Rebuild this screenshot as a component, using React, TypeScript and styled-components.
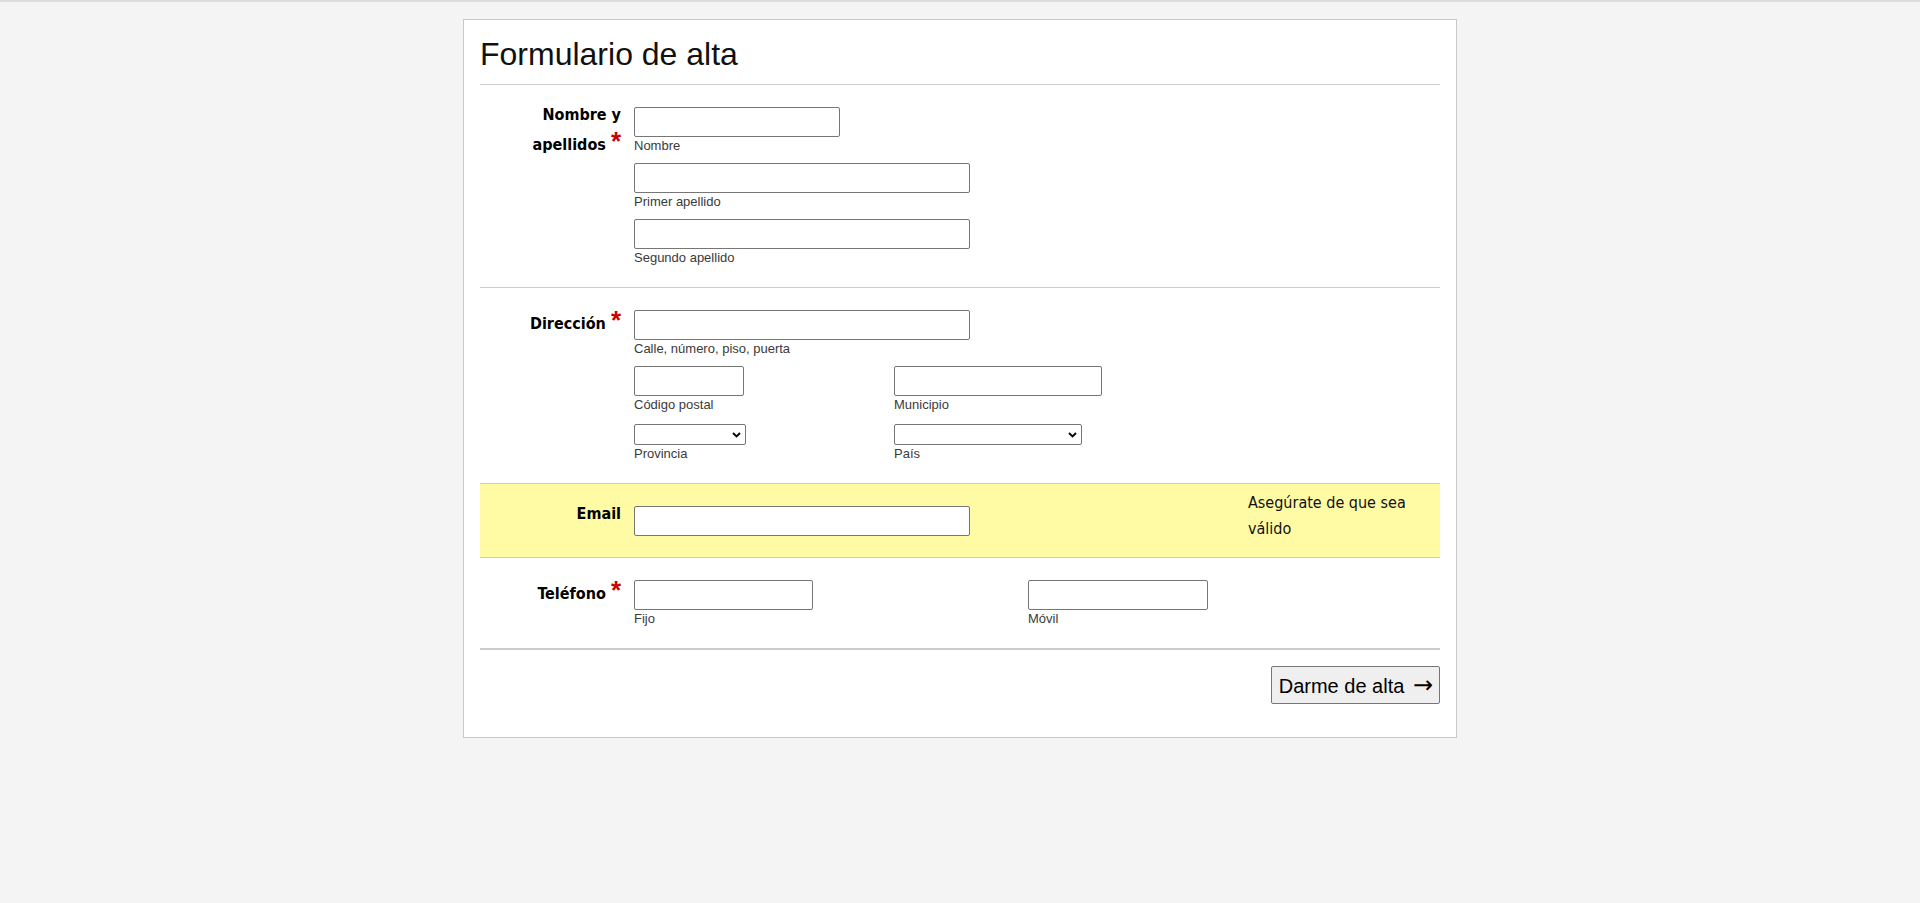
import React from "react";
import styled, {createGlobalStyle} from "styled-components";

const GlobalStyle = createGlobalStyle`
    html, body {
        margin: 0;
        padding: 0;
        background: #f4f4f4;
    }
    body {
        border-top: 2px solid #dcdcdc;
        font-family: "Liberation Sans", Arial, sans-serif;
        color: #000;
    }
`

const Card = styled.div`
    width: 960px;
    margin: 17px auto 0;
    padding: 16px;
    background: #fff;
    border: 1px solid #c8c8c8;
`

const Title = styled.h1`
    margin: 0;
    padding-bottom: 11px;
    font-family: "Liberation Sans", Arial, sans-serif;
    font-size: 32px;
    font-weight: normal;
    line-height: 37px;
    color: #111;
    border-bottom: 1px solid #ccc;
`

const Section = styled.div<{ $highlight?: boolean; $thick?: boolean }>`
    display: grid;
    grid-template-columns: 141px 1fr;
    column-gap: 13px;
    padding: 22px 0 21px;
    background: ${p => (p.$highlight ? "#fffba5" : "transparent")};
    border-bottom: ${p => (p.$thick ? 2 : 1)}px solid #ccc;
`

const Label = styled.div`
    padding-top: 18px;
    margin-top: -22px;
    text-align: right;
    font-family: "DejaVu Sans Condensed", "DejaVu Sans", sans-serif;
    font-stretch: condensed;
    font-weight: bold;
    font-size: 16px;
    line-height: 1.5;
    color: #000;
`

const Required = styled.span`
    font-family: "Liberation Sans", Arial, sans-serif;
    font-size: 26px;
    line-height: 1.15;
    font-weight: bold;
    color: #cc0000;
`

const Fields = styled.div`
    display: flex;
    flex-direction: column;
    gap: 9px;
`

const Pair = styled.div<{ $split: number }>`
    display: grid;
    grid-template-columns: ${p => p.$split}px 1fr;
    align-items: start;
`

const Field = styled.div`
    display: flex;
    flex-direction: column;
    align-items: flex-start;
`

const TextInput = styled.input<{ $w: number }>`
    box-sizing: border-box;
    width: ${p => p.$w}px;
    height: 30px;
    margin: 0;
    padding: 1px 3px;
    border: 1px solid #767676;
    border-radius: 2px;
    background: #fff;
    font-family: "Liberation Sans", Arial, sans-serif;
    font-size: 14px;
`

const SelectBox = styled.div<{ $w: number }>`
    position: relative;
    width: ${p => p.$w}px;
    height: 21px;
    margin-top: 2px;
`

const Select = styled.select`
    appearance: none;
    box-sizing: border-box;
    width: 100%;
    height: 100%;
    margin: 0;
    padding: 0 20px 0 3px;
    border: 1px solid #767676;
    border-radius: 2px;
    background: #fff;
    font-family: "Liberation Sans", Arial, sans-serif;
    font-size: 13px;
`

const Chevron = styled.svg`
    position: absolute;
    right: 5px;
    top: 8px;
    width: 9px;
    height: 6px;
    pointer-events: none;
`

const SubLabel = styled.label`
    font-family: "Liberation Sans", Arial, sans-serif;
    font-size: 13px;
    line-height: 17px;
    color: #3a3a3a;
`

const Hint = styled.div`
    width: 180px;
    margin: -16px 0 -30px;
    font-family: "DejaVu Sans Condensed", "DejaVu Sans", sans-serif;
    font-stretch: condensed;
    font-size: 16px;
    line-height: 26px;
    color: #111;
`

const Footer = styled.div`
    display: flex;
    justify-content: flex-end;
    padding: 16px 0 17px;
`

const SubmitButton = styled.button`
    height: 38px;
    padding: 0 6px 0 7px;
    background: #efefef;
    border: 1px solid #767676;
    border-radius: 2px;
    font-family: "Liberation Sans", Arial, sans-serif;
    font-size: 20px;
    line-height: 1;
    color: #000;
    cursor: pointer;
`

const Arrow = styled.span`
    margin-left: 3px;
    font-family: "DejaVu Sans", sans-serif;
    font-size: 24px;
    line-height: 1;
`

type InputFieldProps = { width: number; caption: string };

const InputField = ({width, caption}: InputFieldProps) => (
    <Field>
        <TextInput type="text" $w={width}/>
        <SubLabel>{caption}</SubLabel>
    </Field>
)

const SelectField = ({width, caption}: InputFieldProps) => (
    <Field>
        <SelectBox $w={width}>
            <Select>
                <option value=""></option>
            </Select>
            <Chevron viewBox="0 0 9 6">
                <path d="M1 1 L4.5 4.5 L8 1" fill="none" stroke="#000" strokeWidth="1.8"/>
            </Chevron>
        </SelectBox>
        <SubLabel>{caption}</SubLabel>
    </Field>
)

const Star = () => <> <Required>*</Required></>

export default function App() {
    return (
        <>
            <GlobalStyle/>
            <Card>
                <Title>Formulario de alta</Title>

                <Section>
                    <Label>Nombre y apellidos<Star/></Label>
                    <Fields>
                        <InputField width={206} caption="Nombre"/>
                        <InputField width={336} caption="Primer apellido"/>
                        <InputField width={336} caption="Segundo apellido"/>
                    </Fields>
                </Section>

                <Section>
                    <Label>Dirección<Star/></Label>
                    <Fields>
                        <InputField width={336} caption="Calle, número, piso, puerta"/>
                        <Pair $split={260}>
                            <InputField width={110} caption="Código postal"/>
                            <InputField width={208} caption="Municipio"/>
                        </Pair>
                        <Pair $split={260}>
                            <SelectField width={112} caption="Provincia"/>
                            <SelectField width={188} caption="País"/>
                        </Pair>
                    </Fields>
                </Section>

                <Section $highlight>
                    <Label>Email</Label>
                    <Pair $split={614}>
                        <TextInput type="email" $w={336}/>
                        <Hint>Asegúrate de que sea válido</Hint>
                    </Pair>
                </Section>

                <Section $thick>
                    <Label>Teléfono<Star/></Label>
                    <Pair $split={394}>
                        <InputField width={179} caption="Fijo"/>
                        <InputField width={180} caption="Móvil"/>
                    </Pair>
                </Section>

                <Footer>
                    <SubmitButton type="submit">Darme de alta <Arrow>→</Arrow></SubmitButton>
                </Footer>
            </Card>
        </>
    )
}
